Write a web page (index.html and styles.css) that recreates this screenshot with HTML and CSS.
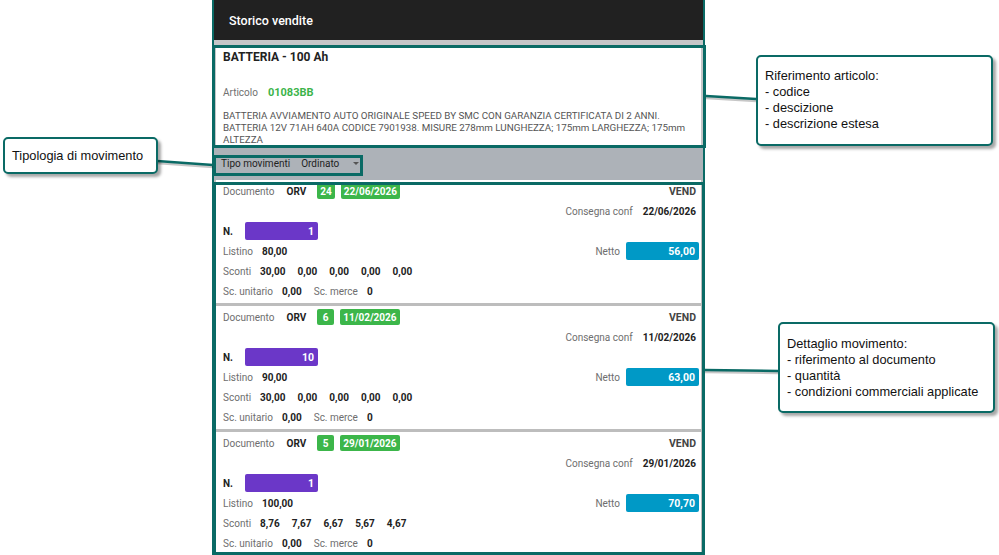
FILE: index.html
```html
<!DOCTYPE html>
<html lang="it">
<head>
<meta charset="utf-8">
<title>Storico vendite</title>
<link rel="stylesheet" href="styles.css">
</head>
<body>
<div class="stage">
  <div class="phone">
    <header class="appbar">Storico vendite</header>

    <section class="article">
      <h1 class="article-title">BATTERIA - 100 Ah</h1>
      <div class="article-code"><span class="lbl">Articolo</span><span class="code">01083BB</span></div>
      <p class="article-desc">BATTERIA AVVIAMENTO AUTO ORIGINALE SPEED BY SMC CON GARANZIA CERTIFICATA DI 2 ANNI. BATTERIA 12V 71AH 640A CODICE 7901938. MISURE 278mm LUNGHEZZA; 175mm LARGHEZZA; 175mm ALTEZZA</p>
    </section>

    <div class="filter">
      <span class="filter-label">Tipo movimenti</span>
      <span class="filter-value">Ordinato</span>
      <span class="caret"></span>
    </div>

    <div class="moves">
      <article class="move">
        <div class="row">
          <span class="lbl">Documento</span><span class="val doc">ORV</span>
          <span class="badge num">24</span><span class="badge date">22/06/2026</span>
          <span class="val type">VEND</span>
        </div>
        <div class="row end"><span class="lbl">Consegna conf</span><span class="val cons">22/06/2026</span></div>
        <div class="row"><span class="val qlbl">N.</span><span class="bar qty">1</span></div>
        <div class="row"><span class="lbl">Listino</span><span class="val">80,00</span><span class="lbl netto">Netto</span><span class="bar net">56,00</span></div>
        <div class="row"><span class="lbl">Sconti</span><span class="val">30,00</span><span class="val sc">0,00</span><span class="val sc">0,00</span><span class="val sc">0,00</span><span class="val sc">0,00</span></div>
        <div class="row"><span class="lbl">Sc. unitario</span><span class="val">0,00</span><span class="lbl grp">Sc. merce</span><span class="val">0</span></div>
      </article>

      <article class="move">
        <div class="row">
          <span class="lbl">Documento</span><span class="val doc">ORV</span>
          <span class="badge num">6</span><span class="badge date">11/02/2026</span>
          <span class="val type">VEND</span>
        </div>
        <div class="row end"><span class="lbl">Consegna conf</span><span class="val cons">11/02/2026</span></div>
        <div class="row"><span class="val qlbl">N.</span><span class="bar qty">10</span></div>
        <div class="row"><span class="lbl">Listino</span><span class="val">90,00</span><span class="lbl netto">Netto</span><span class="bar net">63,00</span></div>
        <div class="row"><span class="lbl">Sconti</span><span class="val">30,00</span><span class="val sc">0,00</span><span class="val sc">0,00</span><span class="val sc">0,00</span><span class="val sc">0,00</span></div>
        <div class="row"><span class="lbl">Sc. unitario</span><span class="val">0,00</span><span class="lbl grp">Sc. merce</span><span class="val">0</span></div>
      </article>

      <article class="move">
        <div class="row">
          <span class="lbl">Documento</span><span class="val doc">ORV</span>
          <span class="badge num">5</span><span class="badge date">29/01/2026</span>
          <span class="val type">VEND</span>
        </div>
        <div class="row end"><span class="lbl">Consegna conf</span><span class="val cons">29/01/2026</span></div>
        <div class="row"><span class="val qlbl">N.</span><span class="bar qty">1</span></div>
        <div class="row"><span class="lbl">Listino</span><span class="val">100,00</span><span class="lbl netto">Netto</span><span class="bar net">70,70</span></div>
        <div class="row"><span class="lbl">Sconti</span><span class="val">8,76</span><span class="val sc">7,67</span><span class="val sc">6,67</span><span class="val sc">5,67</span><span class="val sc">4,67</span></div>
        <div class="row"><span class="lbl">Sc. unitario</span><span class="val">0,00</span><span class="lbl grp">Sc. merce</span><span class="val">0</span></div>
      </article>
    </div>
  </div>

  <!-- highlight frames over the app sections -->
  <div class="frame frame-article"></div>
  <div class="frame frame-filter"></div>
  <div class="frame frame-moves"></div>

  <!-- connector lines between frames and notes -->
  <svg class="wires" width="999" height="555" viewBox="0 0 999 555">
    <g class="wire-shadow">
      <line x1="706" y1="98" x2="756" y2="101"/>
      <line x1="705" y1="372" x2="778" y2="373"/>
      <line x1="157" y1="163" x2="213" y2="167"/>
    </g>
    <g class="wire">
      <line x1="706" y1="96" x2="756" y2="99"/>
      <line x1="705" y1="370" x2="778" y2="371"/>
      <line x1="157" y1="161" x2="213" y2="165"/>
    </g>
  </svg>

  <div class="note note-article">
    Riferimento articolo:<br>- codice<br>- descizione<br>- descrizione estesa
  </div>
  <div class="note note-moves">
    Dettaglio movimento:<br>- riferimento al documento<br>- quantità<br>- condizioni commerciali applicate
  </div>
  <div class="note note-filter">Tipologia di movimento</div>
</div>
</body>
</html>
```

FILE: styles.css
```css
* { box-sizing: border-box; }

html, body {
  margin: 0;
  padding: 0;
  background: #ffffff;
}

body {
  width: 999px;
  height: 555px;
  overflow: hidden;
  font-family: Roboto, "Noto Sans", sans-serif;
}

.stage {
  position: relative;
  width: 999px;
  height: 555px;
}

/* ---------- device screen ---------- */
.phone {
  margin-left: 212px;
  width: 493px;
  height: 555px;
  border-left: 2px solid #0a6a65;
  border-right: 2px solid #0a6a65;
  background: #c5c6c8;
  overflow: hidden;
  display: flex;
  flex-direction: column;
}

.appbar {
  height: 40px;
  flex: none;
  background: #212121;
  color: #ffffff;
  font-size: 12.5px;
  font-weight: 500;
  display: flex;
  align-items: center;
  padding: 1px 0 0 15px;
}

.article {
  flex: none;
  height: 101px;
  margin: 5px 2px 0;
  background: #ffffff;
  padding: 4px 7px 0;
  overflow: hidden;
}

.article-title {
  margin: 0;
  font-size: 12px;
  line-height: 17px;
  font-weight: 700;
  color: #222222;
}

.article-code {
  margin-top: 18px;
  height: 16px;
  display: flex;
  align-items: center;
  gap: 10px;
}

.article-code .lbl {
  font-size: 10px;
  color: #707070;
}

.article-code .code {
  font-size: 11px;
  font-weight: 700;
  color: #3cb44b;
}

.article-desc {
  margin: 10px 0 0;
  font-size: 9.8px;
  line-height: 12px;
  color: #555555;
  padding-right: 2px;
}

.filter {
  flex: none;
  height: 34px;
  background: #adb2b8;
  display: flex;
  align-items: center;
  padding-left: 7px;
  font-size: 10px;
  color: #222222;
}

.filter-value { margin-left: 11px; }

.caret {
  margin-left: 14px;
  width: 0;
  height: 0;
  border-left: 3px solid transparent;
  border-right: 3px solid transparent;
  border-top: 3px solid #555555;
}

.moves {
  flex: none;
  display: flex;
  flex-direction: column;
  gap: 3px;
  background: #bdbdbd;
}

.move {
  background: #ffffff;
  margin: 0 2px;
  padding: 1px 2px 2px 7px;
}

.row {
  height: 20px;
  display: flex;
  align-items: center;
  font-size: 10px;
  white-space: nowrap;
}

.row.end { justify-content: flex-end; }

.lbl {
  color: #6e6e6e;
}

.val {
  font-weight: 700;
  color: #222222;
  margin-left: 9px;
}

.val.doc { margin-left: 12px; }
.val.sc { margin-left: 12px; }
.lbl.grp { margin-left: 12px; }

.val.type {
  margin-left: auto;
  margin-right: 3px;
  font-size: 10.5px;
  color: #444444;
}

.val.cons { margin-left: 10px; margin-right: 3px; }

.val.qlbl { margin-left: 0; width: 22px; }

.badge {
  height: 16px;
  padding: 0 3px;
  border-radius: 2px;
  background: #3cb64a;
  color: #ffffff;
  font-weight: 700;
  font-size: 10px;
  display: inline-flex;
  align-items: center;
}

.badge.num { margin-left: 11px; min-width: 17px; justify-content: center; }
.badge.date { margin-left: 6px; }

.bar {
  width: 73px;
  height: 18px;
  border-radius: 2px;
  color: #ffffff;
  font-weight: 700;
  font-size: 10.5px;
  display: inline-flex;
  align-items: center;
  justify-content: flex-end;
  padding-right: 4px;
}

.bar.qty { background: #6b37c8; }

.lbl.netto { margin-left: auto; }

.bar.net {
  background: #0099c6;
  margin-left: 6px;
}

/* ---------- annotations ---------- */
.frame {
  position: absolute;
  border: 3px solid #0a6a65;
  pointer-events: none;
}

.frame-article { left: 212px; top: 45px; width: 494px; height: 103px; }
.frame-filter { left: 213px; top: 155px; width: 150px; height: 21px; }
.frame-moves { left: 213px; top: 182px; width: 492px; height: 373px; }

.wires {
  position: absolute;
  left: 0;
  top: 0;
  pointer-events: none;
}

.wire line {
  stroke: #0a6a65;
  stroke-width: 2.5;
}

.wire-shadow line {
  stroke: rgba(0, 0, 0, 0.22);
  stroke-width: 2.5;
}

.note {
  position: absolute;
  background: #ffffff;
  border: 2px solid #0a6a65;
  border-radius: 5px;
  box-shadow: 3px 3px 3px rgba(0, 0, 0, 0.35);
  font-family: "Liberation Sans", Arial, sans-serif;
  font-size: 12.8px;
  line-height: 16px;
  color: #111111;
}

.note-article {
  left: 756px;
  top: 55px;
  width: 237px;
  height: 91px;
  padding: 11px 0 0 7px;
}

.note-moves {
  left: 778px;
  top: 322px;
  width: 217px;
  height: 91px;
  padding: 12px 0 0 7px;
}

.note-filter {
  left: 3px;
  top: 137px;
  width: 155px;
  height: 37px;
  padding-left: 7px;
  display: flex;
  align-items: center;
}
```
